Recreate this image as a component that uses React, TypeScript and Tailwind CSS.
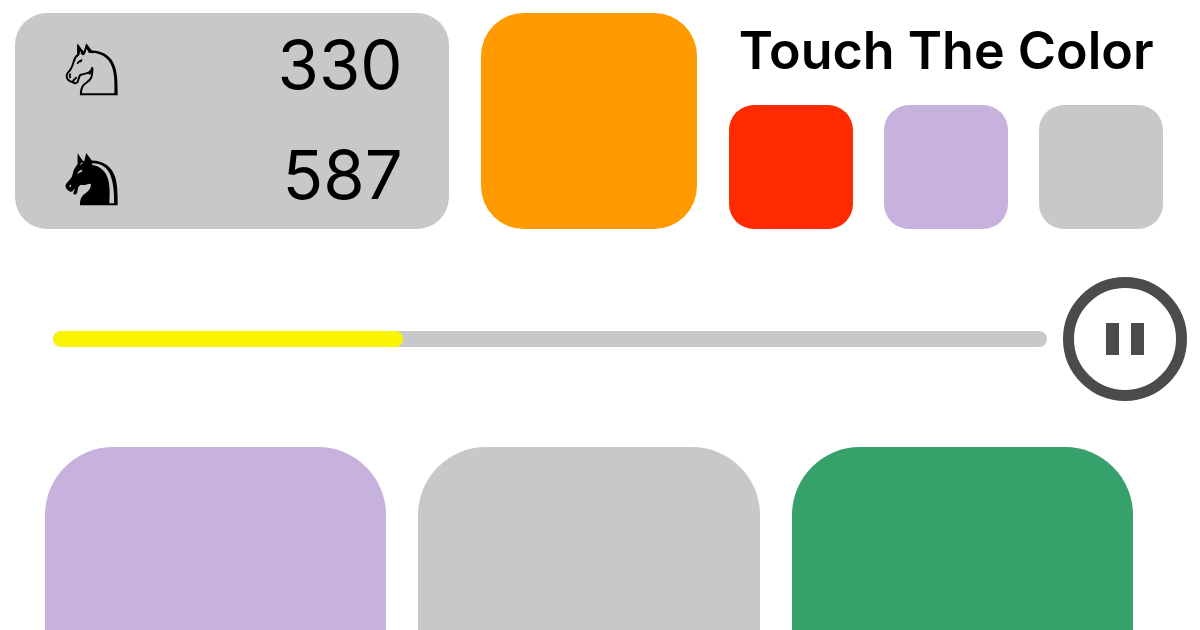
const SWATCHES = [
  { name: "Red", className: "bg-[#ff2a00]" },
  { name: "Lavender", className: "bg-[#c6b2dd]" },
  { name: "Gray", className: "bg-[#c8c8ca]" },
];

const TILES = [
  { name: "Lavender", className: "bg-[#c6b2dd]" },
  { name: "Gray", className: "bg-[#c8c8ca]" },
  { name: "Green", className: "bg-[#37a16b]" },
];

function WhiteKnight() {
  return (
    <svg viewBox="46 40 160 160" className="mt-[10px] size-[53px]" fill="none" stroke="black" strokeWidth="6" role="img" aria-label="White knight">
      <path d="M94 194C94 183 96 174 102 167C109 159 120 156 125 145C129 137 128 129 129 116C121 134 108 131 94 136C86 139 88 153 83 159C79 163 73 161 69 158C59 157 49 147 51 137C52 130 59 126 63 119C68 111 70 105 72 97C74 87 80 79 86 75L86 52L98 66" />
      <path d="M94 70L101 73L105 68L111 49L125 67L133 68" />
      <path d="M84 41L98 62L104 66L110 41L127 63C162 64 186 81 196 109C204 130 205 159 205 198H91V192H195C196 157 195 133 188 113C179 87 160 72 125 69L118 70L111 56L105 75L99 77L92 64L89 76H83Z" fill="black" stroke="none" />
      <path d="M81 102Q85 91 99 88L96 97L89 99L85 104Z" fill="black" stroke="none" />
      <path d="M63 132Q57 138 63 146" strokeWidth="5" />
      <path d="M80 143Q77 149 73 151L69 158" strokeWidth="6" />
      <path d="M128 113Q127 129 118 134" strokeWidth="6" />
    </svg>
  );
}

function BlackKnight() {
  return (
    <svg viewBox="46 40 160 160" className="mt-[10px] size-[53px]" role="img" aria-label="Black knight">
      <path d="M84 41L98 61L104 66L110 40L127 63C162 64 186 81 196 109C204 130 205 159 205 198H91C91 176 98 168 107 162C119 153 125 145 124 133C112 134 104 139 94 136L88 140C82 148 86 163 78 165C73 166 70 163 72 157L77 147L70 153C67 159 62 158 57 154C48 148 45 139 50 132C57 123 65 119 69 105C71 92 76 83 84 74Z" fill="black" />
      <path d="M128 71C156 71 175 84 184 109C192 132 195 161 194 192H180C181 157 182 137 175 116C167 91 150 79 128 76Z" fill="#c8c8ca" />
      <path d="M83 103Q86 93 99 90L96 97L90 99L87 102Z" fill="#c8c8ca" />
      <path d="M64 134Q58 136 60 144L64 141Z" fill="#c8c8ca" />
      <path d="M96 69L100 68L99 71L95 73L93 77L92 74Z" fill="#c8c8ca" />
    </svg>
  );
}

export default function App() {
  const progress = 35.2;

  return (
    <main className="h-screen overflow-hidden bg-white font-['Inter','Liberation_Sans',sans-serif] text-black">
      <header className="grid h-[229px] grid-cols-[2fr_1fr_2fr] gap-8 pt-[13px] pr-[37px] pl-[15px]">
        <section aria-label="Scores" className="flex flex-col gap-[7px] rounded-[32px] bg-[#c8c8ca] pr-[46px] pl-[50px]">
          <div className="flex h-[103px] items-center justify-between">
            <WhiteKnight />
            <span className="text-[67px] leading-none">330</span>
          </div>
          <div className="flex h-[103px] items-center justify-between">
            <BlackKnight />
            <span className="text-[67px] leading-none">587</span>
          </div>
        </section>

        <div role="img" aria-label="Orange" className="rounded-[43px] bg-[#ff9a00]" />

        <section className="flex flex-col justify-between">
          <h1 className="text-center text-[52px] leading-[76px] font-semibold whitespace-nowrap">Touch The Color</h1>
          <div className="grid grid-cols-3 gap-[31px]">
            {SWATCHES.map((swatch) => (
              <div key={swatch.name} role="img" aria-label={swatch.name} className={`aspect-square rounded-[25px] ${swatch.className}`} />
            ))}
          </div>
        </section>
      </header>

      <div className="mt-12 flex items-center gap-4 pr-[13px] pl-[53px]">
        <div
          role="progressbar"
          aria-label="Time"
          aria-valuemin={0}
          aria-valuemax={100}
          aria-valuenow={progress}
          className="h-4 flex-1 overflow-hidden rounded-full bg-[#c8c8ca]"
        >
          <div className="h-full rounded-full bg-[#faf500]" style={{ width: `${progress}%` }} />
        </div>
        <button type="button" aria-label="Pause" className="flex size-[124px] items-center justify-center gap-3 rounded-full border-[11px] border-[#4b4b4b]">
          <span className="h-8 w-[13px] bg-[#4b4b4b]" />
          <span className="h-8 w-[13px] bg-[#4b4b4b]" />
        </button>
      </div>

      <div className="mt-[46px] grid grid-cols-3 gap-8 pr-[67px] pl-[45px]">
        {TILES.map((tile) => (
          <button key={tile.name} type="button" aria-label={tile.name} className={`aspect-square rounded-[68px] ${tile.className}`} />
        ))}
      </div>
    </main>
  );
}
